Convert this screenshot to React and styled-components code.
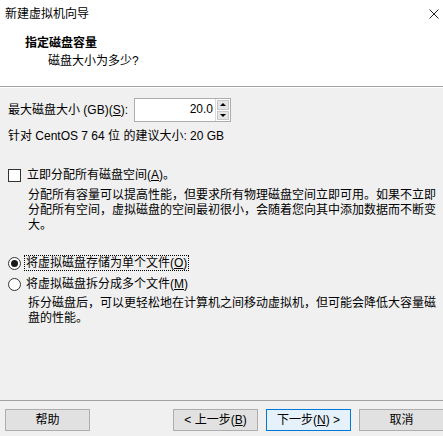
import styled, { createGlobalStyle } from 'styled-components';

const GlobalStyle = createGlobalStyle`
  html, body {
    margin: 0;
    padding: 0;
    background: #f0f0f0;
  }
  body {
    font-family: "Liberation Sans", "Noto Sans CJK SC", sans-serif;
    font-size: 12px;
    color: #000;
  }
`;

const Window = styled.div`
  width: 443px;
  height: 436px;
  display: flex;
  flex-direction: column;
  overflow: hidden;
  background: #f0f0f0;
`;

const Header = styled.div`
  height: 86px;
  background: #fff;
  border-bottom: 1px solid #a0a0a0;
  box-shadow: 0 1px 0 #fff;
  display: flex;
  flex-direction: column;
`;

const TitleBar = styled.div`
  height: 29px;
  display: flex;
  align-items: center;
  justify-content: space-between;
  padding: 0 3px 0 5px;
  line-height: 15px;
`;

const Close = styled.svg`
  width: 10px;
  height: 10px;
  margin-right: 1px;
  margin-bottom: 1px;
`;

const Heading = styled.div`
  margin: 6px 0 0 25px;
  font-weight: bold;
  line-height: 16px;
`;

const SubHeading = styled.div`
  margin: 2px 0 0 48px;
  line-height: 16px;
`;

const Body = styled.div`
  flex: 1;
  display: flex;
  flex-direction: column;
  padding: 11px 8px 0;
`;

const SizeRow = styled.div`
  display: flex;
  align-items: center;
  height: 24px;
  line-height: 15px;
`;

const SpinBox = styled.div`
  margin-left: ${({ $gap }) => $gap}px;
  width: 97px;
  height: 24px;
  box-sizing: border-box;
  border: 1px solid #adadad;
  display: flex;
  background: #fff;
`;

const SpinValue = styled.div`
  flex: 1;
  text-align: right;
  padding-right: 2px;
  line-height: 21px;
  border-right: 1px solid #dadada;
`;

const SpinButtons = styled.div`
  width: 14px;
  display: flex;
  flex-direction: column;
  gap: 1px;
  padding: 1px 0;
  background: #fff;
`;

const SpinButton = styled.div`
  flex: 1;
  background: #e5e5e5;
  border: 1px solid #c8c8c8;
  display: flex;
  align-items: center;
  justify-content: center;
  margin: 0 1px;
`;

const Arrow = styled.span`
  width: 0;
  height: 0;
  border-left: 3px solid transparent;
  border-right: 3px solid transparent;
  ${({ $down }) =>
    $down ? 'border-top: 3px solid #000;' : 'border-bottom: 3px solid #000;'}
`;

const Line = styled.div`
  line-height: 15px;
  margin-top: ${({ $gap }) => $gap || 0}px;
`;

const OptionRow = styled.div`
  display: flex;
  align-items: center;
  height: 16px;
  margin-top: ${({ $gap }) => $gap || 0}px;
`;

const CheckBox = styled.span`
  width: 13px;
  height: 13px;
  box-sizing: border-box;
  border: 1px solid #333;
  background: #fff;
  margin-right: 4px;
`;

const Radio = styled.span`
  width: 13px;
  height: 13px;
  box-sizing: border-box;
  border: 1px solid #333;
  border-radius: 50%;
  background: #fff;
  margin-right: 3px;
  display: flex;
  align-items: center;
  justify-content: center;
  &::after {
    content: '';
    width: 7px;
    height: 7px;
    border-radius: 50%;
    background: ${({ $checked }) => ($checked ? '#1a1a1a' : 'transparent')};
  }
`;

const OptionLabel = styled.span`
  line-height: 14px;
  padding: 0 1px;
  border: 1px ${({ $focus }) => ($focus ? 'dotted #000' : 'solid transparent')};
`;

const Desc = styled.div`
  margin: ${({ $gap }) => $gap || 0}px 0 0 20px;
  line-height: 15px;
  white-space: nowrap;
`;

const Footer = styled.div`
  height: 36px;
  box-sizing: border-box;
  border-top: 1px solid #a0a0a0;
  display: flex;
  align-items: flex-start;
  padding: 8px 0 0 5px;
`;

const Button = styled.div`
  width: ${({ $w }) => $w || 85}px;
  height: 22px;
  box-sizing: border-box;
  flex-shrink: 0;
  display: flex;
  align-items: center;
  justify-content: center;
  line-height: 15px;
  background: ${({ $primary }) => ($primary ? '#e5f1fb' : '#e1e1e1')};
  border: 1px solid ${({ $primary }) => ($primary ? '#0078d7' : '#adadad')};
  margin-left: ${({ $gap }) => $gap || 0}px;
`;

export default function App() {
  return (
    <>
      <GlobalStyle />
      <Window>
        <Header>
          <TitleBar>
            <span>新建虚拟机向导</span>
            <Close viewBox="0 0 10 10">
              <path d="M0.5 0.5 L9.5 9.5 M9.5 0.5 L0.5 9.5" stroke="#222" strokeWidth="1" fill="none" />
            </Close>
          </TitleBar>
          <Heading>指定磁盘容量</Heading>
          <SubHeading>磁盘大小为多少?</SubHeading>
        </Header>
        <Body>
          <SizeRow>
            <span>最大磁盘大小 (GB)(<u>S</u>):</span>
            <SpinBox $gap={6}>
              <SpinValue>20.0</SpinValue>
              <SpinButtons>
                <SpinButton><Arrow /></SpinButton>
                <SpinButton><Arrow $down /></SpinButton>
              </SpinButtons>
            </SpinBox>
          </SizeRow>
          <Line $gap={7}>针对 CentOS 7 64 位 的建议大小: 20 GB</Line>

          <OptionRow $gap={23}>
            <CheckBox />
            <OptionLabel>立即分配所有磁盘空间(<u>A</u>)。</OptionLabel>
          </OptionRow>
          <Desc $gap={5}>
            分配所有容量可以提高性能，但要求所有物理磁盘空间立即可用。如果不立即
            <br />
            分配所有空间，虚拟磁盘的空间最初很小，会随着您向其中添加数据而不断变
            <br />
            大。
          </Desc>

          <OptionRow $gap={22}>
            <Radio $checked />
            <OptionLabel $focus>将虚拟磁盘存储为单个文件(<u>O</u>)</OptionLabel>
          </OptionRow>
          <OptionRow $gap={5}>
            <Radio />
            <OptionLabel>将虚拟磁盘拆分成多个文件(<u>M</u>)</OptionLabel>
          </OptionRow>
          <Desc $gap={4}>
            拆分磁盘后，可以更轻松地在计算机之间移动虚拟机，但可能会降低大容量磁
            <br />
            盘的性能。
          </Desc>
        </Body>
        <Footer>
          <Button>帮助</Button>
          <Button $gap={83}>&lt; 上一步(<u>B</u>)</Button>
          <Button $gap={8} $primary>下一步(<u>N</u>) &gt;</Button>
          <Button $gap={8}>取消</Button>
        </Footer>
      </Window>
    </>
  );
}
